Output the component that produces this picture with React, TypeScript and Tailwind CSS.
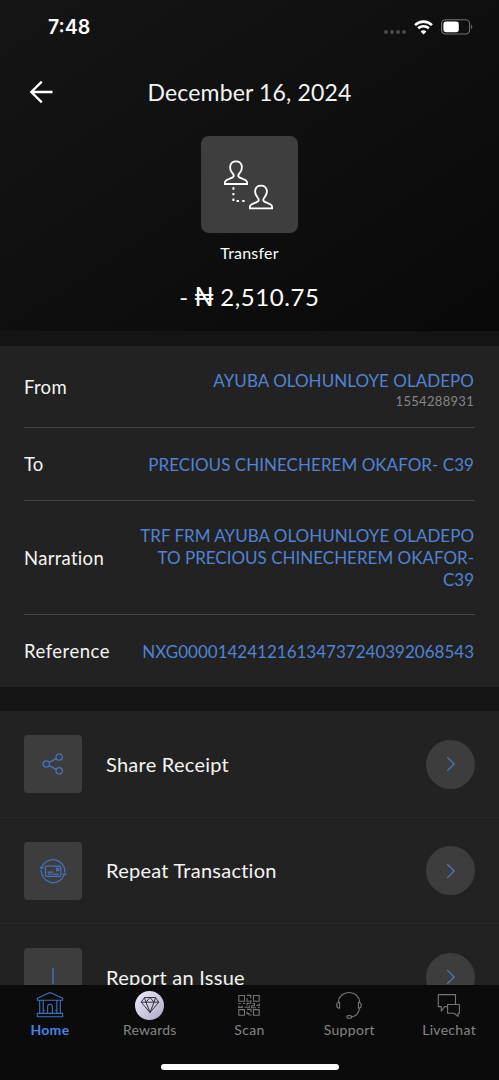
import type { ReactNode } from "react";

interface DetailRowProps {
  label: string;
  className: string;
  labelClass: string;
  children: ReactNode;
}

const DetailRow = ({ label, className, labelClass, children }: DetailRowProps) => (
  <div className={`flex items-center justify-between border-[#474747] ${className}`}>
    <span className={`shrink-0 text-[18.5px] leading-6 text-[#f4f4f4] ${labelClass}`}>{label}</span>
    <div className="pt-px pr-px text-right text-[17px] leading-[22px] text-[#5182d3]">{children}</div>
  </div>
);

interface ActionRowProps {
  label: string;
  icon: ReactNode;
}

const ActionRow = ({ label, icon }: ActionRowProps) => (
  <div className="flex h-[106.5px] shrink-0 items-center border-b border-[#292929] px-6 pt-px">
    <div className="flex size-[58px] items-center justify-center rounded-[4px] bg-[#3d3d3d]">{icon}</div>
    <span className="ml-6 flex-1 pb-px text-[20px] leading-6 tracking-[0.25px] text-[#f4f4f4]">{label}</span>
    <div className="flex size-[49px] items-center justify-center rounded-full bg-[#3d3d3d]">
      <svg width="10" height="16" viewBox="0 0 10 16" fill="none" stroke="#4f7fc9" strokeWidth="1.1">
        <path d="M1.2 1.2 8.2 8l-7 6.8" />
      </svg>
    </div>
  </div>
);

const TransferIcon = () => (
  <svg className="-ml-0.5" width="52" height="52" viewBox="0 0 52 52" fill="none" stroke="#fff" strokeWidth="1.8">
    <path d="M1.9 25v-1.6c0-3.4 5.6-3.2 8.2-5.4 1.1-1 .6-2.3-.3-3.4C5.2 9.2 6.8 2.4 13 2.4s7.8 6.8 3.2 12.2c-.9 1.1-1.4 2.4-.3 3.4 2.6 2.2 8.2 2 8.2 5.4V25Z" />
    <path d="M26.9 49.3v-1.6c0-3.4 5.6-3.2 8.2-5.4 1.1-1 .6-2.3-.3-3.4-4.6-5.4-3-12.2 3.2-12.2s7.8 6.8 3.2 12.2c-.9 1.1-1.4 2.4-.3 3.4 2.6 2.2 8.2 2 8.2 5.4v1.6Z" />
    <path d="M10.4 28.3v13.6h12" strokeWidth="2" strokeDasharray="2.4 3.2" />
  </svg>
);

const ShareIcon = () => (
  <svg width="24" height="24" viewBox="0 0 24 24" fill="none" stroke="#4673bd" strokeWidth="1.3">
    <circle cx="5.3" cy="12" r="3.2" />
    <circle cx="18.2" cy="5" r="3.2" />
    <circle cx="18.2" cy="18.8" r="3.2" />
    <path d="m8.2 10.4 7.1-3.8M8.1 13.6l7.2 3.7" />
  </svg>
);

const RepeatIcon = () => (
  <svg width="28" height="28" viewBox="0 0 28 28" fill="none" stroke="#4673bd" strokeWidth="1.2">
    <path d="M2.6 10.6a12 12 0 0 1 23.3 4.6M25.4 17.6A12 12 0 0 1 2.1 13" />
    <path d="m1 9.6 1.4 2 2.2-1.2M23.6 17.8l2-1.4 1.6 1.8" />
    <rect x="6.4" y="9.1" width="15.4" height="10.2" rx="1" />
    <path d="M8.6 15.2h5.6M8.6 17.2h3.4M13.4 17.2h6.4M17.6 11.4h2.2v2.2h-2.2z" />
  </svg>
);

const ReportIcon = () => (
  <svg width="24" height="24" viewBox="0 0 24 24" fill="none" stroke="#4673bd" strokeWidth="1.3">
    <path d="M12 3v16M12 21v1.5" />
  </svg>
);

const HomeIcon = () => (
  <svg width="28" height="28" viewBox="0 0 28 28" fill="none" stroke="#3f70bd" strokeWidth="1.1" strokeLinejoin="round">
    <path d="M1.3 7.2 14 1.6l12.7 5.6v2H1.3ZM3.7 9.2v13M7.2 9.2v13M20.8 9.2v13M24.3 9.2v13M1.3 25.7v-3.3h25.4v3.3Z" />
    <path d="M11.6 22.3v-6.6a2.4 2.4 0 0 1 4.8 0v6.6M7.2 19.5h1.6M19.2 19.5h1.6" />
  </svg>
);

const RewardsIcon = () => (
  <span className="flex size-[29px] items-center justify-center rounded-full bg-linear-to-br from-[#eeecf9] via-[#cfcce1] to-[#aaa7c3]">
    <svg width="20" height="18" viewBox="0 0 20 18" fill="none" stroke="#24242d" strokeWidth="0.9" strokeLinejoin="round">
      <path d="M4.5 1.5h11l3.3 4.7L10 16.5 1.2 6.2ZM1.2 6.2h17.6M6 6.2l4 10.3 4-10.3M4.5 1.5 6 6.2l4-4.7 4 4.7 1.5-4.7" />
    </svg>
  </span>
);

const ScanIcon = () => (
  <svg width="24" height="24" viewBox="0 0 24 24" fill="none" stroke="#767676" strokeWidth="1.1">
    <path d="M1.8 2.5h5.7v5.7H1.8zM16.5 2.5h5.7v5.7h-5.7zM1.8 16.6h5.7v5.7H1.8zM16.5 16.6h5.7v5.7h-5.7z" />
    <path d="M10 2.4h3.8v3M10 5v3.3h2.5M13.8 7v3.2H10v2.3M1.5 10.5h2.3M6 10.5h2M1.8 12.4v2h3.4v-2M7.4 14.2h5v-1.9M15.5 10.5h2v2.3h-2.8v2h4.2M19.5 12.4h2.8v-2M21 14.5h1.5M10 16.4h4v2.6M10 18.6v2h2v2M13.8 21.2v1.6" />
  </svg>
);

const SupportIcon = () => (
  <svg width="28" height="28" viewBox="0 0 28 28" fill="none" stroke="#767676" strokeWidth="1.1">
    <path d="M3.2 11.3C3.6 5.6 8.2 1.5 14 1.5s10.4 4.1 10.8 9.8" />
    <path d="M4.6 11.2c-2 0-2.9 1.3-2.9 3s.9 3 2.9 3ZM23.4 11.2c2 0 2.9 1.3 2.9 3s-.9 3-2.9 3Z" />
    <path d="M24.6 17.4c-.9 4.8-3.9 8-8.2 8.6" />
    <rect x="11.8" y="24.6" width="4.8" height="2.7" rx="1.35" />
  </svg>
);

const ChatIcon = () => (
  <svg width="24" height="24" viewBox="0 0 24 24" fill="none" stroke="#767676" strokeWidth="1.1" strokeLinejoin="round">
    <path d="M10 13.6H7.6l-3.3 4.6v-4.6H1.3V1.6h17.2v9.8" />
    <path d="M10.6 11.5h11.8v8.8H21v3.1l-4-3.1h-6.4Z" />
  </svg>
);

const tabs = [
  { label: "Home", icon: <HomeIcon />, labelClass: "font-bold text-[#4a83e6] tracking-[0.3px]" },
  { label: "Rewards", icon: <RewardsIcon />, labelClass: "text-[#858585] tracking-[0.2px]" },
  { label: "Scan", icon: <ScanIcon />, labelClass: "text-[#858585] tracking-[0.4px]" },
  { label: "Support", icon: <SupportIcon />, labelClass: "text-[#858585] tracking-[0.3px]" },
  { label: "Livechat", icon: <ChatIcon />, labelClass: "text-[#858585] tracking-[0.3px]" },
];

const StatusBar = () => (
  <div className="flex h-[54px] items-center justify-between pr-[26px] pl-12 text-white">
    <span className="pt-0.5 font-[Inter] text-[19.5px] font-semibold">7:48</span>
    <div className="flex items-center">
      <div className="mt-2.5 flex gap-[2px]">
        {[0, 1, 2, 3].map((dot) => (
          <span key={dot} className="size-1 rounded-full bg-[#4b4b4b]" />
        ))}
      </div>
      <svg className="ml-2" width="19" height="15" viewBox="0 0 19 15" fill="none" stroke="#fff" strokeWidth="2.6">
        <path d="M1 5.1c4.9-4.6 12.1-4.6 17 0M4.1 8.3c3.1-2.8 7.7-2.8 10.8 0" />
        <path d="M9.5 14.5 6.6 11.4c1.7-1.4 4.1-1.4 5.8 0Z" fill="#fff" stroke="none" />
      </svg>
      <svg className="ml-2" width="32" height="16" viewBox="0 0 32 16" fill="none">
        <rect x="0.6" y="0.8" width="28" height="14.2" rx="4" stroke="#737373" strokeWidth="1.1" />
        <rect x="2.4" y="2.6" width="15.4" height="10.6" rx="2.4" fill="#fff" />
        <path d="M30.2 5.8c1.5.6 1.5 3.6 0 4.2Z" fill="#737373" />
      </svg>
    </div>
  </div>
);

export default function App() {
  return (
    <div className="flex h-[1080px] w-[499px] flex-col overflow-hidden bg-[#141414] font-[Lato,sans-serif]">
      <header className="flex h-[331px] shrink-0 flex-col bg-linear-to-br from-[#151515] via-[#0f0f0f] to-[#090909] text-white">
        <StatusBar />
        <div className="grid h-[76px] grid-cols-[60px_1fr_60px] items-center">
          <svg className="ml-7" width="26" height="26" viewBox="0 0 26 26" fill="none" stroke="#fff" strokeWidth="2.3">
            <path d="M13.8 2.6 3.3 13l10.5 10.4M3 13h21.5" />
          </svg>
          <h1 className="text-center text-[23px] tracking-[0.15px] text-[#f4f4f4]">December 16, 2024</h1>
        </div>
        <div className="mt-[6px] flex flex-col items-center">
          <div className="flex size-[97px] items-center justify-center rounded-lg bg-[#3e3e3e]">
            <TransferIcon />
          </div>
          <p className="mt-2 text-[16px] leading-6 tracking-[0.2px]">Transfer</p>
          <p className="mt-[17px] text-[24px] leading-[30px] tracking-[0.6px]">
            - <span className="-mx-px font-[Inter] text-[25px]">₦</span> 2,510.75
          </p>
        </div>
      </header>

      <section className="mt-[15px] h-[341px] shrink-0 bg-[#222] px-6">
        <DetailRow label="From" className="h-[82px] border-b" labelClass="tracking-[0.3px]">
          <p className="mt-[5px] leading-[22px] tracking-[0.04px]">AYUBA OLOHUNLOYE OLADEPO</p>
          <p className="text-[13px] leading-[18px] tracking-[0.3px] text-[#858585]">1554288931</p>
        </DetailRow>
        <DetailRow label="To" className="h-[73px] border-b" labelClass="tracking-[0.2px]">
          <p className="pt-px tracking-[0.04px]">PRECIOUS CHINECHEREM OKAFOR- C39</p>
        </DetailRow>
        <DetailRow label="Narration" className="h-[114px] border-b" labelClass="tracking-[0.3px]">
          <p>TRF FRM AYUBA OLOHUNLOYE OLADEPO</p>
          <p>TO PRECIOUS CHINECHEREM OKAFOR-</p>
          <p>C39</p>
        </DetailRow>
        <DetailRow label="Reference" className="h-[72px]" labelClass="tracking-[0.5px]">
          <p className="pt-px">NXG000014241216134737240392068543</p>
        </DetailRow>
      </section>

      <section className="mt-6 flex min-h-0 flex-1 flex-col overflow-hidden bg-[#222]">
        <ActionRow label="Share Receipt" icon={<ShareIcon />} />
        <ActionRow label="Repeat Transaction" icon={<RepeatIcon />} />
        <ActionRow label="Report an Issue" icon={<ReportIcon />} />
      </section>

      <nav className="flex h-[95px] shrink-0 flex-col items-center bg-[#0b0b0b]">
        <div className="grid h-[79px] w-full grid-cols-5 pt-[5px]">
          {tabs.map((tab) => (
            <div key={tab.label} className="flex flex-col items-center">
              <span className="flex h-[30px] items-center">{tab.icon}</span>
              <span className={`text-[14px] leading-5 ${tab.labelClass}`}>{tab.label}</span>
            </div>
          ))}
        </div>
        <div className="h-1.5 w-[178px] rounded-full bg-white" />
      </nav>
    </div>
  );
}
